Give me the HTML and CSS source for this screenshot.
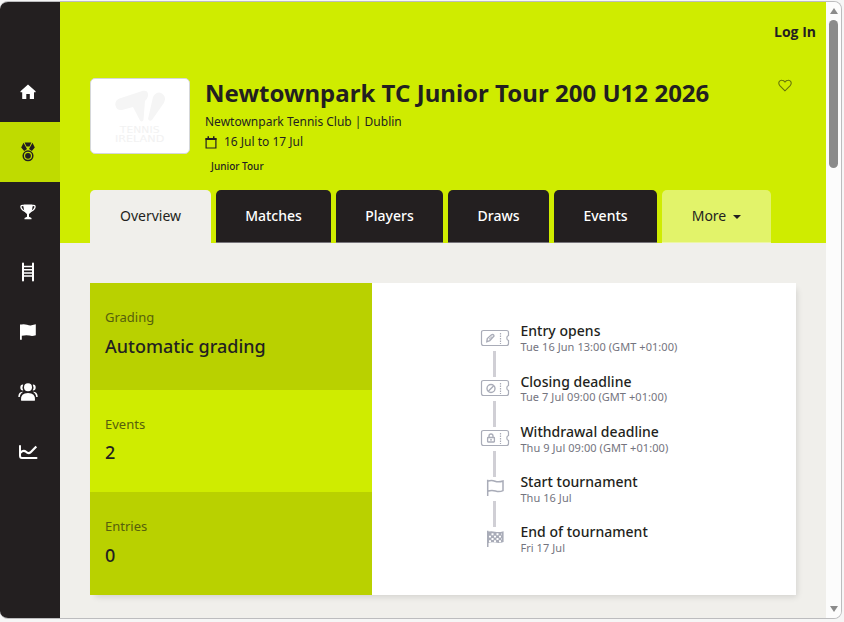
FILE: index.html
```html
<!DOCTYPE html>
<html lang="en">
<head>
  <meta charset="utf-8">
  <meta name="viewport" content="width=device-width, initial-scale=1">
  <title>Newtownpark TC Junior Tour 200 U12 2026</title>
  <link rel="stylesheet" href="styles.css">
</head>
<body>
  <div class="window">
    <nav class="sidebar">
      <a class="sidebar-item"><svg width="16" height="16" viewBox="0 0 16 16"><path fill="currentColor" d="M8 .5 15.600 7.200V8.300H14V14.500Q14 15 13.500 15H9.800V10H6.300V15H2.700Q2.200 15 2.200 14.500V8.300H.5V7.200Z"/></svg></a>
      <a class="sidebar-item active"><svg width="14" height="20" viewBox="0 0 14 20"><path fill="currentColor" d="M3.600.5H10.400L8.500 4.600H5.500ZM2.500 .8 6 7 3.200 9 .2 5.500ZM11.500 .8 8 7 10.800 9 13.800 5.500Z"/><circle cx="7" cy="13.800" r="4.800" fill="none" stroke="currentColor" stroke-width="1.500"/><circle cx="7" cy="13.800" r="2.900" fill="currentColor"/></svg></a>
      <a class="sidebar-item"><svg width="16" height="16" viewBox="0 0 16 16"><path fill="currentColor" d="M3.400.5H12.600Q12.600 8.500 9 10V12.800L11.500 14V15.300H4.500V14L7 12.800V10Q3.400 8.500 3.400.5Z"/><path fill="none" stroke="currentColor" stroke-width="1.300" d="M4 2.200Q3 1 1.500 1.500C0 3 2 6.500 5 7.300M12 2.200Q13 1 14.500 1.500C16 3 14 6.500 11 7.300"/></svg></a>
      <a class="sidebar-item"><svg width="14" height="20" viewBox="0 0 14 20"><path fill="none" stroke="currentColor" stroke-width="2" stroke-linecap="round" d="M2 1.500V18.500M12 1.500V18.500"/><path stroke="currentColor" stroke-width="1.500" d="M2 4.500H12M2 7.700H12M2 10.900H12M2 14.100H12"/></svg></a>
      <a class="sidebar-item"><svg width="18" height="18" viewBox="0 0 18 18"><path fill="currentColor" d="M1 1.500H2.500Q5 .8 8 1.800T12.500 2.200L16.800 1.300V12.200Q13.500 13.500 10.500 12.600T2.800 12.700V16.700H1Z"/></svg></a>
      <a class="sidebar-item"><svg width="20" height="20" viewBox="0 0 20 20"><g fill="currentColor"><circle cx="10" cy="5.300" r="4"/><path d="M3 18Q2.500 11 10 11T17 18Q17 18.800 16.500 18.800H3.500Q3 18.800 3 18Z"/><path d="M5.200 2.500Q2.300 2.300 2.300 5.500T5.300 8.500Q3.800 5.500 5.200 2.500ZM14.800 2.500Q17.700 2.300 17.700 5.500T14.700 8.500Q16.200 5.500 14.800 2.500ZM5.300 9.700Q.2 9.700 .3 15H1.800Q2 11.700 5.300 9.700ZM14.700 9.700Q19.800 9.700 19.700 15H18.200Q18 11.700 14.700 9.700Z"/></g></svg></a>
      <a class="sidebar-item"><svg width="20" height="18" viewBox="0 0 20 18"><path fill="none" stroke="currentColor" stroke-width="2" stroke-linecap="round" stroke-linejoin="round" d="M2 3V12.500Q2 15 4 15H18.500"/><path fill="none" stroke="currentColor" stroke-width="2.200" d="M2.500 9.700Q5.500 6.500 8 8.800T12.700 9.200L18.300 3.500"/></svg></a>
    </nav>

    <div class="page">
      <header class="masthead">
        <div class="topbar"><a class="login">Log In</a></div>
        <div class="intro">
          <div class="club-logo">
            <svg width="50" height="32" viewBox="0 0 50 32"><path fill="#f5f5f5" d="M4.500 8.500 28 .8Q33.500-.2 33 6 32.500 8.500 30 11L28.500 30Q27 32.500 25 30.500L18 17 7 20Q1.500 20.500.5 15.500T4.500 8.500Z"/><path fill="#f5f5f5" d="M38 7Q40 2.500 44.500 2.500 50 4 50 9 50 11 48.500 13.500L37 30Q34.500 32 33 29Z"/></svg>
            <span class="logo-line">TENNIS</span>
            <span class="logo-line wide">IRELAND</span>
          </div>
          <div class="details">
            <h1>Newtownpark TC Junior Tour 200 U12 2026</h1>
            <p>Newtownpark Tennis Club | Dublin</p>
            <p class="dates"><svg width="12" height="13" viewBox="0 0 12 13"><path fill="none" stroke="currentColor" stroke-width="1.200" d="M1.100 2.700H10.900V12H1.100Z"/><path fill="currentColor" d="M.5 2.200H11.500V4H.5ZM2.500.2H4V3H2.500ZM8 .2H9.500V3H8Z"/></svg>16 Jul to 17 Jul</p>
            <span class="tag">Junior Tour</span>
          </div>
          <svg class="favourite" width="14" height="13" viewBox="0 0 14 13"><path fill="none" stroke="currentColor" stroke-width="1.100" d="M7 11.800 1.800 6.600C-.4 4 1.500 1 4 1.200 5.500 1.200 6.500 2.200 7 3 7.500 2.200 8.500 1.200 10 1.200 12.500 1 14.400 4 12.200 6.600Z"/></svg>
        </div>
        <nav class="tabs">
          <a class="tab tab-overview selected">Overview</a>
          <a class="tab tab-matches">Matches</a>
          <a class="tab tab-players">Players</a>
          <a class="tab tab-draws">Draws</a>
          <a class="tab tab-events">Events</a>
          <a class="tab more">More <span class="caret"></span></a>
        </nav>
      </header>

      <main class="card">
        <dl class="stats">
          <div class="stat grading"><dt>Grading</dt><dd>Automatic grading</dd></div>
          <div class="stat bright"><dt>Events</dt><dd>2</dd></div>
          <div class="stat"><dt>Entries</dt><dd>0</dd></div>
        </dl>
        <ol class="timeline">
          <li>
            <svg class="icon" width="30" height="18" viewBox="0 0 30 18"><g fill="none" stroke="currentColor"><path stroke-width="1.200" d="M3.500 1.500H26.500Q28.500 1.500 28.500 3.500V6.500Q26.800 7 26.800 9T28.500 11.500V14.500Q28.500 16.500 26.500 16.500H3.500Q1.500 16.500 1.500 14.500V3.500Q1.500 1.500 3.500 1.500Z"/><path stroke-width="1.200" stroke-dasharray="1.500 1" d="M20.500 4V15"/><path stroke-width="1.400" d="M6.800 12.800 7.300 9.500 11.500 5.800Q13.800 4.800 14 7L9.800 11.700Z"/><path d="M9 10.300 12 7.700"/></g></svg>
            <div><strong>Entry opens</strong><time>Tue 16 Jun 13:00 (GMT +01:00)</time></div>
          </li>
          <li>
            <svg class="icon" width="30" height="18" viewBox="0 0 30 18"><g fill="none" stroke="currentColor"><path stroke-width="1.200" d="M3.500 1.500H26.500Q28.500 1.500 28.500 3.500V6.500Q26.800 7 26.800 9T28.500 11.500V14.500Q28.500 16.500 26.500 16.500H3.500Q1.500 16.500 1.500 14.500V3.500Q1.500 1.500 3.500 1.500Z"/><path stroke-width="1.200" stroke-dasharray="1.500 1" d="M20.500 4V15"/><circle cx="11" cy="9.500" r="4" stroke-width="1.400"/><path stroke-width="1.400" d="M8.300 12.200 13.700 6.800"/></g></svg>
            <div><strong>Closing deadline</strong><time>Tue 7 Jul 09:00 (GMT +01:00)</time></div>
          </li>
          <li>
            <svg class="icon" width="30" height="18" viewBox="0 0 30 18"><g fill="none" stroke="currentColor"><path stroke-width="1.200" d="M3.500 1.500H26.500Q28.500 1.500 28.500 3.500V6.500Q26.800 7 26.800 9T28.500 11.500V14.500Q28.500 16.500 26.500 16.500H3.500Q1.500 16.500 1.500 14.500V3.500Q1.500 1.500 3.500 1.500Z"/><path stroke-width="1.200" stroke-dasharray="1.500 1" d="M20.500 4V15"/><rect x="7.600" y="8.500" width="6.800" height="4.500" rx=".5" stroke-width="1.300"/><path stroke-width="1.300" d="M9 8.500V7Q9 5 11 5T13 7V8.500M10 10.800H12"/></g></svg>
            <div><strong>Withdrawal deadline</strong><time>Thu 9 Jul 09:00 (GMT +01:00)</time></div>
          </li>
          <li>
            <svg class="icon" width="30" height="18" viewBox="0 0 30 18"><path fill="none" stroke="currentColor" stroke-width="1.500" d="M7.700.8V17M7.700 2.200Q11.500.8 15 2.200T23 2V11.600Q19.500 13.300 15.500 12T7.700 12.300"/></svg>
            <div><strong>Start tournament</strong><time>Thu 16 Jul</time></div>
          </li>
          <li>
            <svg class="icon" width="30" height="18" viewBox="0 0 30 18"><path fill="currentColor" d="M7 .8H8.500V1.600Q11.500.8 15 1.700T23.600 1.200V12Q19.500 13.700 15.500 12.600T8.500 13V17H7Z"/><path fill="none" stroke="#fff" stroke-width="1.900" stroke-dasharray="2 3" d="M11.500 4.200H22M9 6.600H22.500M11.500 9H22M9 11.200H22"/></svg>
            <div><strong>End of tournament</strong><time>Fri 17 Jul</time></div>
          </li>
        </ol>
      </main>
    </div>

    <div class="scrollbar">
      <span class="arrow up"></span>
      <span class="thumb"></span>
      <span class="arrow down"></span>
    </div>
  </div>
</body>
</html>
```
FILE: styles.css
```css
* {
  box-sizing: border-box;
}

body {
  margin: 0;
  padding-top: 1px;
  height: 622px;
  overflow: hidden;
  background: #f6f6f6;
  color: #231f20;
  font-family: "Noto Sans", "Open Sans", sans-serif;
}

h1, p, dl, dd, ol {
  margin: 0;
  padding: 0;
}

svg {
  display: block;
}

.window {
  display: flex;
  width: 842px;
  height: 618px;
  border: 1px solid #bcbcbe;
  border-left: 0;
  border-radius: 8px;
  overflow: hidden;
}

.sidebar {
  width: 60px;
  padding-top: 60px;
  background: #231f20;
  color: #fff;
}

.sidebar-item {
  display: flex;
  align-items: center;
  justify-content: center;
  height: 60px;
  padding: 0 4px 1px 0;
}

.sidebar-item.active {
  background: #bfdb00;
  color: #231f20;
}

.page {
  width: 766px;
  background: #f0efeb;
}

.masthead {
  height: 241px;
  padding-left: 30px;
  background: #cfec00;
}

.topbar {
  display: flex;
  justify-content: flex-end;
  height: 76px;
  padding: 20px 10px 0 0;
}

.login {
  font-family: "Open Sans", sans-serif;
  font-size: 14px;
  font-weight: 700;
  line-height: 20px;
}

.intro {
  display: flex;
  height: 112px;
}

.club-logo {
  display: flex;
  flex-direction: column;
  align-items: center;
  width: 100px;
  height: 76px;
  padding-top: 11px;
  border: 1px solid #d5d7d9;
  border-radius: 5px;
  background: #fff;
  color: #f2f2f2;
}

.club-logo svg {
  margin-bottom: 4px;
}

.logo-line {
  font: 400 8px/9px "DejaVu Sans", sans-serif;
  transform: scaleX(1.35);
}

.logo-line.wide {
  transform: scaleX(1.4);
}

.details {
  flex: 1;
  padding-left: 15px;
  font-size: 12px;
  line-height: 20px;
}

.details h1 {
  height: 34px;
  font-size: 24px;
  line-height: 29px;
  letter-spacing: .02px;
  white-space: nowrap;
}

.dates {
  display: flex;
  align-items: center;
  gap: 7px;
}

.tag {
  display: block;
  padding: 4px 0 0 6px;
  font-size: 10px;
  font-weight: 500;
}

.favourite {
  margin: 1px 34px 0 0;
  color: #68760a;
}

.tabs {
  display: flex;
  gap: 5px;
  height: 53px;
}

.tab {
  display: flex;
  align-items: center;
  justify-content: center;
  padding-bottom: 2px;
  border-bottom: 1px solid #77747a;
  border-radius: 5px 5px 0 0;
  background: #231f20;
  color: #fff;
  font-size: 14px;
  font-weight: 500;
}

.tab-overview { width: 121px; }
.tab-matches { width: 115px; }
.tab-players { width: 107px; }
.tab-draws { width: 101px; }
.tab-events { width: 103px; }

.tab.selected {
  border-color: #f0efeb;
  background: #f0efeb;
  color: #231f20;
  font-weight: 400;
}

.tab.more {
  width: 109px;
  border-color: #edf6a5;
  background: #e2f36a;
  color: #231f20;
  font-weight: 400;
}

.caret {
  margin: 3px 0 0 7px;
  border: 4px solid transparent;
  border-top-color: #231f20;
  border-bottom: 0;
}

.card {
  display: flex;
  width: 706px;
  height: 312px;
  margin: 40px 0 0 30px;
  background: #fff;
  box-shadow: 3px 4px 6px -2px rgba(0, 0, 0, .12);
}

.stats {
  width: 282px;
}

.stat {
  height: 103px;
  padding: 25px 15px 0;
  background: #b9d100;
}

.stat.grading {
  height: 107px;
}

.stat.bright {
  height: 102px;
  background: #cfec00;
}

.stat dt {
  color: #56600c;
  font-size: 13px;
  line-height: 18px;
}

.stat dd {
  padding-top: 8px;
  font-size: 18px;
  font-weight: 500;
  line-height: 24px;
}

.stat.bright dd {
  padding-top: 7px;
}

.timeline {
  flex: 1;
  padding: 39.3px 0 0 108px;
  list-style: none;
}

.timeline li {
  position: relative;
  display: flex;
  gap: 10.400px;
  height: 50.25px;
}

/* connector between two steps */
.timeline li:not(:last-child)::after {
  content: "";
  position: absolute;
  top: 28.4px;
  left: 13px;
  width: 3px;
  height: 26px;
  background: #d0cfd5;
}

.timeline .icon {
  width: 30px;
  height: 18px;
  margin-top: 6.4px;
  color: #a9acb8;
}

.timeline strong,
.timeline time {
  display: block;
  white-space: nowrap;
}

.timeline strong {
  font-size: 14px;
  font-weight: 500;
  line-height: 17.9px;
  letter-spacing: .03px;
}

.timeline time {
  color: #74747e;
  font-size: 11px;
  line-height: 14px;
  letter-spacing: .06px;
}

.scrollbar {
  display: flex;
  flex-direction: column;
  align-items: center;
  width: 15px;
  padding: 6px 0 6px;
  background: #fcfcfc;
}

.arrow {
  border: 4px solid transparent;
}

.arrow.up {
  border-top: 0;
  border-bottom: 6px solid #8b8b8b;
}

.arrow.down {
  margin-top: auto;
  border-top: 6px solid #8b8b8b;
  border-bottom: 0;
}

.thumb {
  width: 9px;
  height: 148px;
  margin-top: 6px;
  border-radius: 5px;
  background: #8b8b8b;
}
```
